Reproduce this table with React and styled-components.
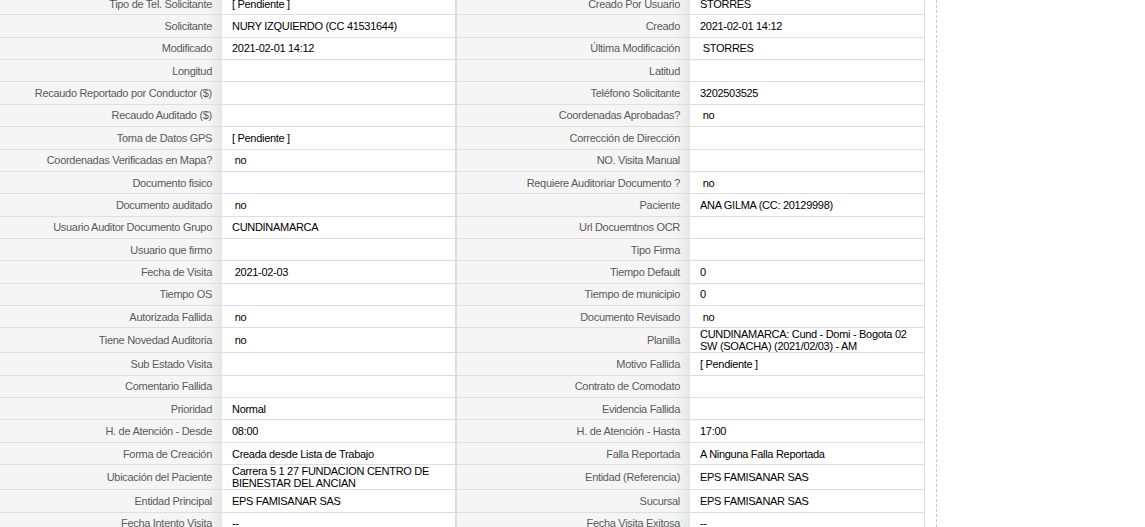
import React from 'react';
import styled, { createGlobalStyle } from 'styled-components';

const rows = [
  ['Tipo de Tel. Solicitante', '[ Pendiente ]', 'Creado Por Usuario', 'STORRES'],
  ['Solicitante', 'NURY IZQUIERDO (CC 41531644)', 'Creado', '2021-02-01 14:12'],
  ['Modificado', '2021-02-01 14:12', 'Última Modificación', '\u00a0STORRES'],
  ['Longitud', '', 'Latitud', ''],
  ['Recaudo Reportado por Conductor ($)', '', 'Teléfono Solicitante', '3202503525'],
  ['Recaudo Auditado ($)', '', 'Coordenadas Aprobadas?', '\u00a0no'],
  ['Toma de Datos GPS', '[ Pendiente ]', 'Corrección de Dirección', ''],
  ['Coordenadas Verificadas en Mapa?', '\u00a0no', 'NO. Visita Manual', ''],
  ['Documento fisico', '', 'Requiere Auditoriar Documento ?', '\u00a0no'],
  ['Documento auditado', '\u00a0no', 'Paciente', 'ANA GILMA (CC: 20129998)'],
  ['Usuario Auditor Documento Grupo', 'CUNDINAMARCA', 'Url Docuemtnos OCR', ''],
  ['Usuario que firmo', '', 'Tipo Firma', ''],
  ['Fecha de Visita', '\u00a02021-02-03', 'Tiempo Default', '0'],
  ['Tiempo OS', '', 'Tiempo de municipio', '0'],
  ['Autorizada Fallida', '\u00a0no', 'Documento Revisado', '\u00a0no'],
  ['Tiene Novedad Auditoria', '\u00a0no', 'Planilla', 'CUNDINAMARCA: Cund - Domi - Bogota 02 SW (SOACHA) (2021/02/03) - AM'],
  ['Sub Estado Visita', '', 'Motivo Fallida', '[ Pendiente ]'],
  ['Comentario Fallida', '', 'Contrato de Comodato', ''],
  ['Prioridad', 'Normal', 'Evidencia Fallida', ''],
  ['H. de Atención - Desde', '08:00', 'H. de Atención - Hasta', '17:00'],
  ['Forma de Creación', 'Creada desde Lista de Trabajo', 'Falla Reportada', 'A Ninguna Falla Reportada'],
  ['Ubicación del Paciente', 'Carrera 5 1 27 FUNDACION CENTRO DE BIENESTAR DEL ANCIAN', 'Entidad (Referencia)', 'EPS FAMISANAR SAS'],
  ['Entidad Principal', 'EPS FAMISANAR SAS', 'Sucursal', 'EPS FAMISANAR SAS'],
  ['Fecha Intento Visita', '--', 'Fecha Visita Exitosa', '--'],
];

const GlobalStyle = createGlobalStyle`
  html, body {
    margin: 0;
    padding: 0;
    background: #ffffff;
    overflow: hidden;
  }
  body {
    font-family: "Liberation Sans", Arial, sans-serif;
  }
`;

const Page = styled.div`
  display: flex;
  align-items: stretch;
  height: 100vh;
  overflow: hidden;
`;

const Main = styled.div`
  width: 925px;
  flex: none;
`;

const Aside = styled.div`
  flex: 1;
  margin-left: 11px;
  border-left: 1px dashed #c8c8c8;
`;

const DetailTable = styled.table`
  width: 925px;
  margin-top: -7px;
  border-collapse: separate;
  border-spacing: 0;
  table-layout: fixed;
  font-size: 11px;
  line-height: 12px;
  letter-spacing: -0.3px;
`;

const Label = styled.td`
  height: 21.36px;
  padding: 0 10px;
  text-align: right;
  vertical-align: middle;
  color: #5a5a5a;
  background: linear-gradient(to right, #f5f5f5 0, #f5f5f5 calc(100% - 14px), #e6e6e6 100%);
  border-bottom: 1px solid #dedede;
  border-left: ${(p) => (p.$second ? '1px solid #dcdcdc' : 'none')};
  white-space: nowrap;
  overflow: hidden;
`;

const Value = styled.td`
  height: 21.36px;
  padding: 0 10px;
  text-align: left;
  vertical-align: middle;
  color: #000000;
  background: #ffffff;
  border-bottom: 1px solid #dedede;
  border-right: 1px solid #dcdcdc;
`;

const App = () => (
  <>
    <GlobalStyle />
    <Page>
      <Main>
        <DetailTable>
          <colgroup>
            <col style={{ width: 222 }} />
            <col style={{ width: 234 }} />
            <col style={{ width: 234 }} />
            <col style={{ width: 235 }} />
          </colgroup>
          <tbody>
            {rows.map(([l1, v1, l2, v2]) => (
              <tr key={l1}>
                <Label>{l1}</Label>
                <Value>{v1}</Value>
                <Label $second>{l2}</Label>
                <Value>{v2}</Value>
              </tr>
            ))}
          </tbody>
        </DetailTable>
      </Main>
      <Aside />
    </Page>
  </>
);

export default App;
